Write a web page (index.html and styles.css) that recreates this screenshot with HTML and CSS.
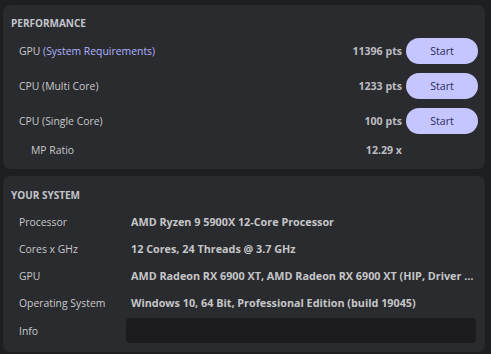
FILE: index.html
```html
<!DOCTYPE html>
<html lang="en">
<head>
    <meta charset="UTF-8">
    <meta name="viewport" content="width=device-width, initial-scale=1.0">
    <title>Benchmark</title>
    <link rel="stylesheet" href="styles.css">
</head>
<body>
    <div class="panel performance">
        <div class="panel-title">PERFORMANCE</div>
        <div class="bench-row">
            <div class="bench-name">GPU <span class="link">(System Requirements)</span></div>
            <div class="bench-score">11396 pts</div>
            <button class="start-btn">Start</button>
        </div>
        <div class="bench-row">
            <div class="bench-name">CPU (Multi Core)</div>
            <div class="bench-score">1233 pts</div>
            <button class="start-btn">Start</button>
        </div>
        <div class="bench-row">
            <div class="bench-name">CPU (Single Core)</div>
            <div class="bench-score">100 pts</div>
            <button class="start-btn">Start</button>
        </div>
        <div class="bench-row ratio">
            <div class="bench-name">MP Ratio</div>
            <div class="bench-score">12.29 x</div>
            <div class="btn-space"></div>
        </div>
    </div>

    <div class="panel system">
        <div class="panel-title">YOUR SYSTEM</div>
        <div class="info-row">
            <div class="info-label">Processor</div>
            <div class="info-value">AMD Ryzen 9 5900X 12-Core Processor</div>
        </div>
        <div class="info-row">
            <div class="info-label">Cores x GHz</div>
            <div class="info-value">12 Cores, 24 Threads @ 3.7 GHz</div>
        </div>
        <div class="info-row">
            <div class="info-label">GPU</div>
            <div class="info-value">AMD Radeon RX 6900 XT, AMD Radeon RX 6900 XT (HIP, Driver Version 22.20.44.01)</div>
        </div>
        <div class="info-row">
            <div class="info-label">Operating System</div>
            <div class="info-value">Windows 10, 64 Bit, Professional Edition (build 19045)</div>
        </div>
        <div class="info-row info-input-row">
            <div class="info-label">Info</div>
            <input type="text" class="info-input">
        </div>
    </div>
</body>
</html>
```

FILE: styles.css
```css
body {
    margin: 0;
    padding: 5px 6px 0 3px;
    background: #1e1f22;
    font-family: "Open Sans", "Noto Sans", sans-serif;
    font-size: 10.4px;
    color: #c9c9cc;
    height: 354px;
    box-sizing: border-box;
    overflow: hidden;
}
.panel {
    background: #2a2b2f;
    border-radius: 8px;
    padding: 8px 7px 7px 8px;
}
.panel.system {
    margin-top: 7px;
    padding-right: 9px;
}
.panel-title {
    font-size: 10px;
    font-weight: bold;
    color: #c4c4cc;
    height: 20px;
    line-height: 20px;
}
.system .panel-title {
    margin-top: 1px;
    margin-bottom: 3px;
}
.bench-row {
    display: flex;
    align-items: center;
    height: 35px;
    padding-left: 8px;
}
.bench-row.ratio {
    height: 24px;
    padding-left: 20px;
}
.bench-name {
    flex: 1;
}
.link {
    color: #b0b4ff;
}
.bench-score {
    font-size: 10.6px;
    font-weight: bold;
    color: #bdbdc0;
    margin-right: 4px;
}
.start-btn, .btn-space {
    width: 72px;
    height: 26px;
}
.start-btn {
    border: none;
    border-radius: 13px;
    background: #c5c6ff;
    color: #2b2c5c;
    font-family: inherit;
    font-size: 10.6px;
    cursor: pointer;
}
.info-row {
    display: flex;
    align-items: center;
    height: 27px;
    padding-left: 8px;
}
.info-input-row {
    height: 29px;
}
.info-label {
    width: 107px;
    flex-shrink: 0;
}
.info-value {
    flex: 1;
    min-width: 0;
    padding-left: 5px;
    font-size: 10.8px;
    font-weight: bold;
    color: #c6c6c8;
    white-space: nowrap;
    overflow: hidden;
    text-overflow: ellipsis;
}
.info-input {
    flex: 1;
    height: 25px;
    box-sizing: border-box;
    border: none;
    border-radius: 4px;
    background: #1c1c1f;
    color: #ddd;
    outline: none;
}
```
